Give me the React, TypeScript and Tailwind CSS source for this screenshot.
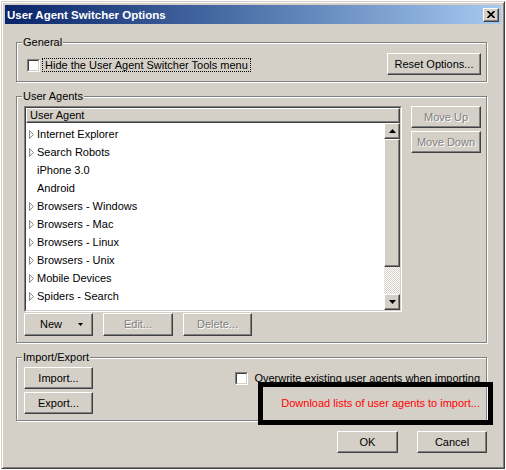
import React from "react";

const raised =
  "bg-[#d4d0c8] border border-t-white border-l-white border-r-[#404040] border-b-[#404040] shadow-[inset_-1px_-1px_0_#808080]";

function Btn({
  children,
  className = "",
  disabled = false,
}: {
  children: React.ReactNode;
  className?: string;
  disabled?: boolean;
}) {
  return (
    <div
      className={`${raised} flex items-center justify-center ${
        disabled ? "text-[#808080] [text-shadow:1px_1px_0_#fff]" : "text-black"
      } ${className}`}
    >
      {children}
    </div>
  );
}

function Check() {
  return (
    <div className="w-[13px] h-[13px] shrink-0 flex border border-t-[#808080] border-l-[#808080] border-r-white border-b-white">
      <div className="flex-1 bg-white border border-t-[#404040] border-l-[#404040] border-r-[#d4d0c8] border-b-[#d4d0c8]" />
    </div>
  );
}

function Group({
  label,
  className = "",
  children,
}: {
  label: string;
  className?: string;
  children: React.ReactNode;
}) {
  return (
    <div
      className={`relative w-[471px] border border-[#808080] shadow-[inset_1px_1px_0_#fff,1px_1px_0_#fff] ${className}`}
    >
      <div className="absolute left-[5px] -top-[7px] px-[1px] bg-[#d4d0c8] leading-[13px]">
        {label}
      </div>
      {children}
    </div>
  );
}

function Twisty() {
  return (
    <svg width="6" height="9" viewBox="0 0 6 9">
      <path d="M0.5 0.5 L4.5 4.5 L0.5 8.5 Z" fill="#f4f4f4" stroke="#8a8a8a" strokeWidth="1" />
    </svg>
  );
}

const rows: { t: string; kids: boolean }[] = [
  { t: "Internet Explorer", kids: true },
  { t: "Search Robots", kids: true },
  { t: "iPhone 3.0", kids: false },
  { t: "Android", kids: false },
  { t: "Browsers - Windows", kids: true },
  { t: "Browsers - Mac", kids: true },
  { t: "Browsers - Linux", kids: true },
  { t: "Browsers - Unix", kids: true },
  { t: "Mobile Devices", kids: true },
  { t: "Spiders - Search", kids: true },
  { t: "Miscellaneous", kids: true },
];

export default function App() {
  return (
    <div className="relative w-[506px] h-[470px] overflow-hidden bg-white font-['Liberation_Sans',Arial,sans-serif] text-[11px] leading-[13px] text-black">
      <div className="ml-[1px] mt-[1px] w-[504px] h-[468px] flex flex-col bg-[#d4d0c8] border border-t-[#d4d0c8] border-l-[#d4d0c8] border-r-[#404040] border-b-[#404040] shadow-[inset_1px_1px_0_#fff,inset_-1px_-1px_0_#808080] p-[3px]">
        {/* Title bar */}
        <div className="h-[19px] shrink-0 flex items-center bg-linear-to-r from-[#0a246a] to-[#a6caf0] pl-[2px] pr-[2px]">
          <span className="text-white font-bold text-[11.5px] leading-[14px]">
            User Agent Switcher Options
          </span>
          <div className={`${raised} ml-auto w-[16px] h-[14px] flex items-center justify-center`}>
            <svg width="8" height="7" viewBox="0 0 8 7">
              <path d="M0.5 0 L7.5 7 M7.5 0 L0.5 7" stroke="#000" strokeWidth="1.7" />
            </svg>
          </div>
        </div>

        {/* Body */}
        <div className="flex flex-col pl-[11px] pt-[18px]">
          <Group label="General" className="h-[40px] flex items-start pt-[10px] pl-[10px] pr-[5px]">
            <div className="mt-[5px] flex items-center">
              <Check />
              <div className="ml-[2px] h-[14px] px-[2px] border border-dotted border-black leading-[12px]">
                Hide the User Agent Switcher Tools menu
              </div>
            </div>
            <Btn className="ml-auto w-[94px] h-[22px]">Reset Options...</Btn>
          </Group>

          <Group label="User Agents" className="mt-[14px] h-[247px] flex flex-col pt-[9px] pl-[7px]">
            <div className="flex">
              {/* Tree */}
              <div className="w-[378px] h-[206px] flex border border-t-[#808080] border-l-[#808080] border-r-white border-b-white">
                <div className="flex-1 flex flex-col bg-white border border-t-[#404040] border-l-[#404040] border-r-[#d4d0c8] border-b-[#d4d0c8] overflow-hidden">
                  <div className={`${raised} h-[15px] shrink-0 flex items-center pl-[3px]`}>
                    User Agent
                  </div>
                  <div className="flex-1 flex min-h-0">
                    <div className="flex-1 overflow-hidden pt-[2px]">
                      {rows.map((r) => (
                        <div key={r.t} className="h-[18px] flex items-center pl-[3px]">
                          <div className="w-[8px] shrink-0 flex items-center">
                            {r.kids && <Twisty />}
                          </div>
                          <span>{r.t}</span>
                        </div>
                      ))}
                    </div>
                    <div className="w-[16px] shrink-0 flex flex-col">
                      <div className={`${raised} h-[16px] shrink-0 flex items-center justify-center`}>
                        <svg width="7" height="4" viewBox="0 0 7 4">
                          <polygon points="3.5,0 7,4 0,4" fill="#000" />
                        </svg>
                      </div>
                      <div className={`${raised} h-[128px] shrink-0`} />
                      <div className="h-[27px] shrink-0 bg-[repeating-conic-gradient(#d4d0c8_0_25%,#fff_0_50%)] bg-[length:2px_2px]" />
                      <div className={`${raised} h-[16px] shrink-0 flex items-center justify-center`}>
                        <svg width="7" height="4" viewBox="0 0 7 4">
                          <polygon points="0,0 7,0 3.5,4" fill="#000" />
                        </svg>
                      </div>
                    </div>
                  </div>
                </div>
              </div>
              <div className="ml-[9px] flex flex-col gap-[3px]">
                <Btn disabled className="w-[70px] h-[22px]">Move Up</Btn>
                <Btn disabled className="w-[70px] h-[22px]">Move Down</Btn>
              </div>
            </div>
            <div className="mt-[1px] flex gap-[10px]">
              <Btn className="w-[69px] h-[23px]">
                <span className="ml-[6px]">New</span>
                <svg className="ml-[16px]" width="5" height="3" viewBox="0 0 5 3">
                  <polygon points="0,0 5,0 2.5,3" fill="#000" />
                </svg>
              </Btn>
              <Btn disabled className="w-[70px] h-[23px]">Edit...</Btn>
              <Btn disabled className="w-[69px] h-[23px]">Delete...</Btn>
            </div>
          </Group>

          <Group label="Import/Export" className="mt-[14px] h-[64px] flex pt-[9px] pl-[7px] pr-[6px]">
            <div className="flex flex-col gap-[3px]">
              <Btn className="w-[69px] h-[22px]">Import...</Btn>
              <Btn className="w-[69px] h-[22px]">Export...</Btn>
            </div>
            <div className="flex-1 flex flex-col items-end pt-[5px]">
              <div className="flex items-center gap-[6px] h-[13px]">
                <Check />
                <span>Overwrite existing user agents when importing</span>
              </div>
              <div className="mt-[12px] text-[#ff0000]">
                Download lists of user agents to import...
              </div>
            </div>
          </Group>

          <div className="mt-[10px] w-[471px] flex justify-end gap-[19px]">
            <Btn className="w-[61px] h-[22px]">OK</Btn>
            <Btn className="w-[70px] h-[22px]">Cancel</Btn>
          </div>
        </div>
      </div>

      {/* annotation rectangle */}
      <div className="absolute left-[258px] top-[382px] w-[235px] h-[43px] border-[5px] border-black" />
    </div>
  );
}
